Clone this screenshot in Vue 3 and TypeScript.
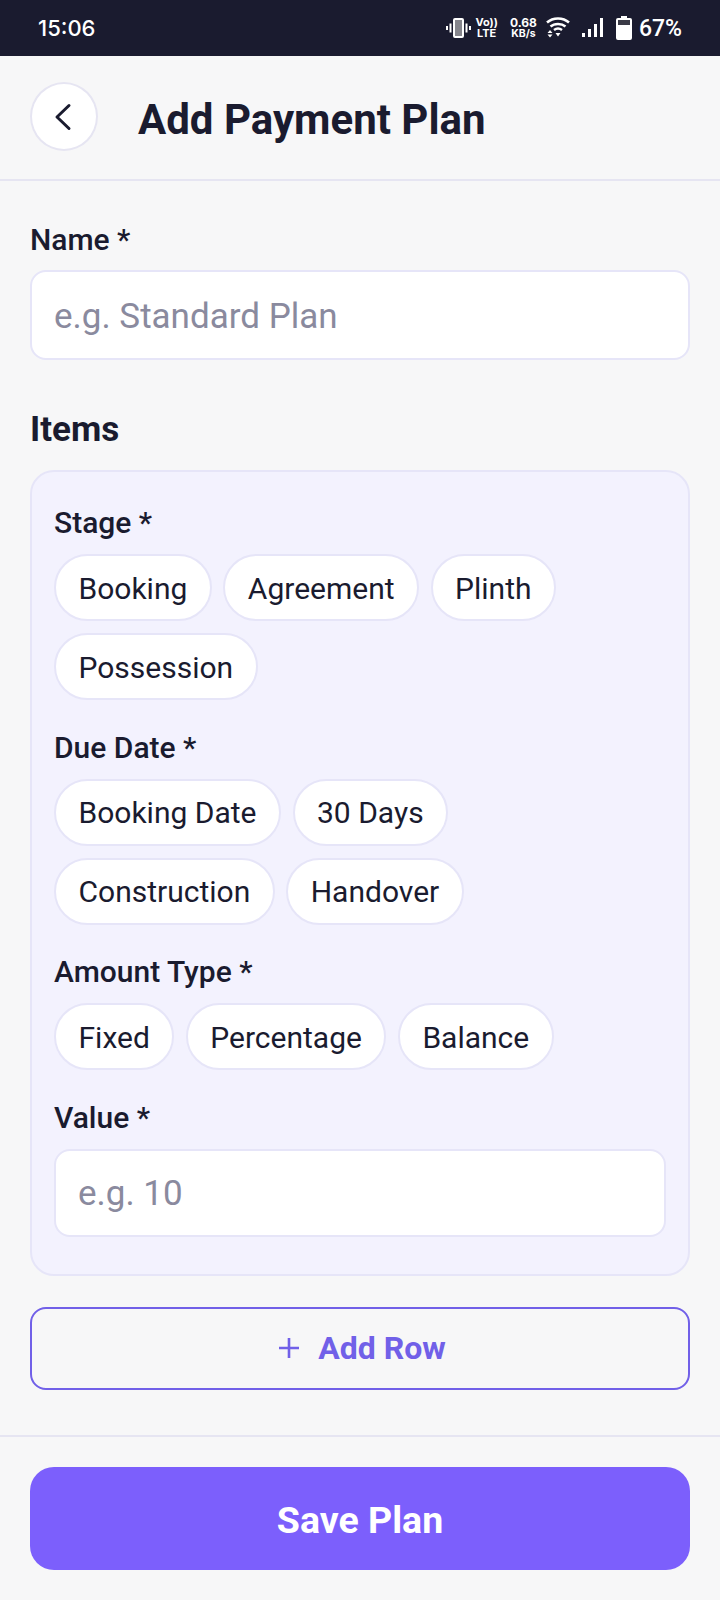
<template>
  <div class="screen">
    <div class="statusbar">
      <span class="clock">15:06</span>
      <div class="status-right">
        <svg class="ic-vibrate" width="25" height="20" viewBox="0 0 25 20">
          <rect x="8" y="1" width="9" height="18" rx="1" fill="#85858c" stroke="#fff" stroke-width="2" />
          <path d="M4.500 5.500v9M1 8v4M20.500 5.500v9M24 8v4" stroke="#fff" stroke-width="2" fill="none" />
        </svg>
        <div class="volte"><span>Vo))</span><span>LTE</span></div>
        <div class="speed"><span>0.68</span><span class="unit">KB/s</span></div>
        <svg class="ic-wifi" width="24" height="22" viewBox="0 0 24 22" fill="none" stroke="#fff" stroke-width="2.500">
          <path d="M1 5.500c6-5.500 16-5.500 22 0" />
          <path d="M4.500 9.500c4-3.500 11-3.500 15 0" />
          <path d="M8 13c2.400-1.800 5.600-1.800 8 0" />
          <path d="M1.500 16l2.500-3 2.500 3zM1.500 17.500h5l-2.500 3z" fill="#fff" stroke="none" />
          <path d="M9.500 16h5l-2.500 3.500z" fill="#fff" stroke="none" />
        </svg>
        <svg class="ic-signal" width="21" height="20" viewBox="0 0 21 20" fill="#fff">
          <rect x="0" y="15" width="3" height="4" />
          <rect x="6" y="11" width="3" height="8" />
          <rect x="12" y="6" width="3" height="13" />
          <rect x="18" y="0" width="3" height="19" />
        </svg>
        <svg class="ic-battery" width="16" height="24" viewBox="0 0 16 24">
          <path d="M5 0h6v2h3a2 2 0 0 1 2 2v18a2 2 0 0 1-2 2H2a2 2 0 0 1-2-2V4a2 2 0 0 1 2-2h3z" fill="#fff" />
          <rect x="2" y="4" width="12" height="5" fill="#3a3a46" />
        </svg>
        <span class="percent">67%</span>
      </div>
    </div>

    <header class="header">
      <div class="back">
        <svg width="24" height="30" viewBox="0 0 24 30" fill="none" stroke="#1a1b2f" stroke-width="3" stroke-linecap="round" stroke-linejoin="round">
          <path d="M17 3.500 L5 15 L17 26.500" />
        </svg>
      </div>
      <h1 class="title">Add Payment Plan</h1>
    </header>

    <main class="body">
      <label class="label">Name *</label>
      <input class="field name-field" placeholder="e.g. Standard Plan" />

      <h2 class="section">Items</h2>
      <section class="card">
        <div v-for="group in groups" :key="group.label" class="group">
          <label class="label">{{ group.label }}</label>
          <div class="chips">
            <span v-for="chip in group.chips" :key="chip" class="chip">{{ chip }}</span>
          </div>
        </div>
        <label class="label">Value *</label>
        <input class="field" placeholder="e.g. 10" />
      </section>

      <button class="add-row">
        <svg width="22" height="22" viewBox="0 0 22 22" stroke="#7160e8" stroke-width="2.600" fill="none">
          <path d="M11 1v20M1 11h20" />
        </svg>
        <span>Add Row</span>
      </button>
    </main>

    <footer class="footer">
      <button class="save">Save Plan</button>
    </footer>
  </div>
</template>

<script setup lang="ts">
interface ChipGroup {
  label: string;
  chips: string[];
}

const groups: ChipGroup[] = [
  { label: 'Stage *', chips: ['Booking', 'Agreement', 'Plinth', 'Possession'] },
  { label: 'Due Date *', chips: ['Booking Date', '30 Days', 'Construction', 'Handover'] },
  { label: 'Amount Type *', chips: ['Fixed', 'Percentage', 'Balance'] },
];
</script>

<style>
html,
body {
  margin: 0;
  background: #f7f7f8;
}
</style>

<style scoped>
.screen {
  width: 720px;
  height: 1600px;
  background: #f7f7f8;
  font-family: Roboto, "Liberation Sans", sans-serif;
  color: #1a1b2f;
  display: flex;
  flex-direction: column;
  overflow: hidden;
}

.statusbar {
  height: 56px;
  flex: none;
  background: #1a1b2f;
  color: #fff;
  display: flex;
  align-items: center;
  justify-content: space-between;
  padding: 0 38px;
  box-sizing: border-box;
}

.clock {
  font-family: Inter, Roboto, sans-serif;
  font-size: 22px;
  font-weight: 500;
}

.status-right {
  display: flex;
  align-items: center;
}

.ic-vibrate {
  margin-right: 4px;
}

.volte,
.speed {
  display: flex;
  flex-direction: column;
  align-items: center;
  font-family: Inter, Roboto, sans-serif;
  font-weight: 700;
  line-height: 11px;
}

.volte {
  font-size: 11px;
  margin-right: 12px;
}

.speed {
  font-size: 12px;
  margin-right: 9px;
}

.speed .unit {
  font-size: 10.500px;
}

.ic-wifi {
  margin-right: 12px;
}

.ic-signal {
  margin-right: 13px;
}

.ic-battery {
  margin-right: 7px;
}

.percent {
  font-size: 23px;
  font-weight: 500;
}

.header {
  height: 123px;
  flex: none;
  display: flex;
  align-items: center;
  gap: 41px;
  padding: 0 30px;
  border-bottom: 2px solid #e6e5f2;
}

.back {
  width: 68px;
  height: 69px;
  margin-top: -2px;
  box-sizing: border-box;
  border: 2px solid #e6e5f2;
  border-radius: 50%;
  background: #fff;
  display: flex;
  align-items: center;
  justify-content: center;
}

.title {
  margin: 4px 0 0 -1px;
  font-size: 42px;
  font-weight: 700;
}

.body {
  flex: 1;
  padding: 42px 30px 0;
  display: flex;
  flex-direction: column;
}

.label {
  display: block;
  font-size: 30px;
  font-weight: 500;
  line-height: 34px;
  margin-bottom: 14px;
}

.field {
  width: 100%;
  height: 88px;
  box-sizing: border-box;
  border: 2px solid #e6e5f8;
  border-radius: 16px;
  background: #fff;
  padding: 1px 22px 0;
  font-family: inherit;
  font-size: 35px;
  color: #1a1b2f;
  outline: none;
}

.name-field {
  height: 90px;
  margin-top: -1px;
  padding-top: 3px;
}

.field::placeholder {
  color: #8a8a9e;
  opacity: 1;
}

.section {
  margin: 50px 0 20px;
  font-size: 35px;
  font-weight: 700;
  line-height: 40px;
}

.card {
  background: #f3f2fe;
  border: 2px solid #e6e5f8;
  border-radius: 24px;
  padding: 34px 22px 37px;
}

.group {
  margin-bottom: 30.500px;
}

.chips {
  display: flex;
  flex-wrap: wrap;
  gap: 12px 11.500px;
}

.chip {
  height: 67px;
  box-sizing: border-box;
  display: flex;
  align-items: center;
  padding: 1px 22.500px 0;
  background: #fff;
  border: 2px solid #e6e5f8;
  border-radius: 34px;
  font-size: 30px;
}

.add-row {
  margin-top: 31px;
  height: 83px;
  padding: 0 0 0 4px;
  border: 2px solid #7160e8;
  border-radius: 16px;
  background: transparent;
  display: flex;
  align-items: center;
  justify-content: center;
  gap: 18px;
  font-family: inherit;
  font-size: 32px;
  font-weight: 700;
  color: #7160e8;
}

.footer {
  flex: none;
  border-top: 2px solid #e6e5f2;
  padding: 30px 30px 0;
  height: 165px;
  box-sizing: border-box;
}

.save {
  width: 100%;
  height: 103px;
  padding: 2px 0 0;
  border: none;
  border-radius: 24px;
  background: #7c5ffc;
  color: #fff;
  font-family: inherit;
  font-size: 37.500px;
  font-weight: 700;
}
</style>
